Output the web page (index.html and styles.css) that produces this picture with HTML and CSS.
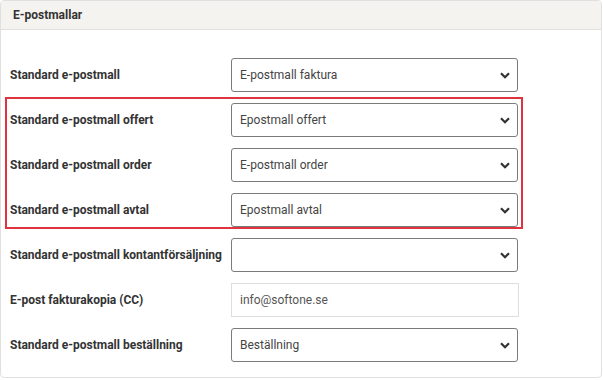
FILE: index.html
```html
<!DOCTYPE html>
<html lang="sv">

<head>
  <meta charset="UTF-8">
  <meta name="viewport" content="width=device-width, initial-scale=1.0">
  <title>E-postmallar</title>
  <link rel="stylesheet" href="styles.css">
</head>

<body>
  <div class="panel">
    <div class="panel-heading">E-postmallar</div>
    <div class="panel-body">
      <div class="row">
        <label>Standard e-postmall</label>
        <div class="select"><span>E-postmall faktura</span><svg viewBox="0 0 10 7"><path d="M1 1.2 L5 5.2 L9 1.2" /></svg></div>
      </div>

      <div class="highlight">
        <div class="row">
          <label>Standard e-postmall offert</label>
          <div class="select"><span>Epostmall offert</span><svg viewBox="0 0 10 7"><path d="M1 1.2 L5 5.2 L9 1.2" /></svg></div>
        </div>
        <div class="row">
          <label>Standard e-postmall order</label>
          <div class="select"><span>E-postmall order</span><svg viewBox="0 0 10 7"><path d="M1 1.2 L5 5.2 L9 1.2" /></svg></div>
        </div>
        <div class="row">
          <label>Standard e-postmall avtal</label>
          <div class="select"><span>Epostmall avtal</span><svg viewBox="0 0 10 7"><path d="M1 1.2 L5 5.2 L9 1.2" /></svg></div>
        </div>
      </div>

      <div class="row">
        <label>Standard e-postmall kontantförsäljning</label>
        <div class="select"><span></span><svg viewBox="0 0 10 7"><path d="M1 1.2 L5 5.2 L9 1.2" /></svg></div>
      </div>
      <div class="row">
        <label>E-post fakturakopia (CC)</label>
        <div class="text-input">info@softone.se</div>
      </div>
      <div class="row">
        <label>Standard e-postmall beställning</label>
        <div class="select"><span>Beställning</span><svg viewBox="0 0 10 7"><path d="M1 1.2 L5 5.2 L9 1.2" /></svg></div>
      </div>
    </div>
  </div>
</body>

</html>
```

FILE: styles.css
```css
body {
  margin: 0;
  background-color: #fff;
  font-family: Roboto, "Liberation Sans", sans-serif;
  font-size: 12px;
  color: #333;
}

.panel {
  width: 600px;
  height: 376px;
  border: 1px solid #e0e0e0;
  border-radius: 4px;
  overflow: hidden;
}

.panel-heading {
  height: 28px;
  line-height: 28px;
  padding-left: 12px;
  background-color: #f5f3f0;
  border-bottom: 1px solid #e2e0dc;
  font-weight: bold;
  color: #333;
}

.panel-body {
  display: flex;
  flex-direction: column;
  gap: 11px;
  padding: 28px 0 0 9px;
}

.highlight {
  position: relative;
  display: flex;
  flex-direction: column;
  gap: 11px;
}

/* red frame round the three new rows */
.highlight::after {
  content: '';
  position: absolute;
  top: -6px;
  bottom: -2px;
  left: -5px;
  width: 514px;
  border: 2px solid #e03340;
  pointer-events: none;
}

.row {
  display: grid;
  grid-template-columns: 221px 287px;
  align-items: center;
  height: 34px;
}

.row label {
  font-weight: bold;
  color: #333;
  white-space: nowrap;
}

.select {
  display: flex;
  align-items: center;
  justify-content: space-between;
  box-sizing: border-box;
  height: 34px;
  padding: 0 7px 0 8px;
  border: 1px solid #7b7b7b;
  border-radius: 3px;
  color: #444;
}

.select svg {
  width: 10px;
  height: 7px;
  fill: none;
  stroke: #333;
  stroke-width: 2.2;
}

.text-input {
  box-sizing: border-box;
  width: 288px;
  height: 34px;
  line-height: 32px;
  padding-left: 8px;
  border: 1px solid #dedede;
  color: #555;
}
```
